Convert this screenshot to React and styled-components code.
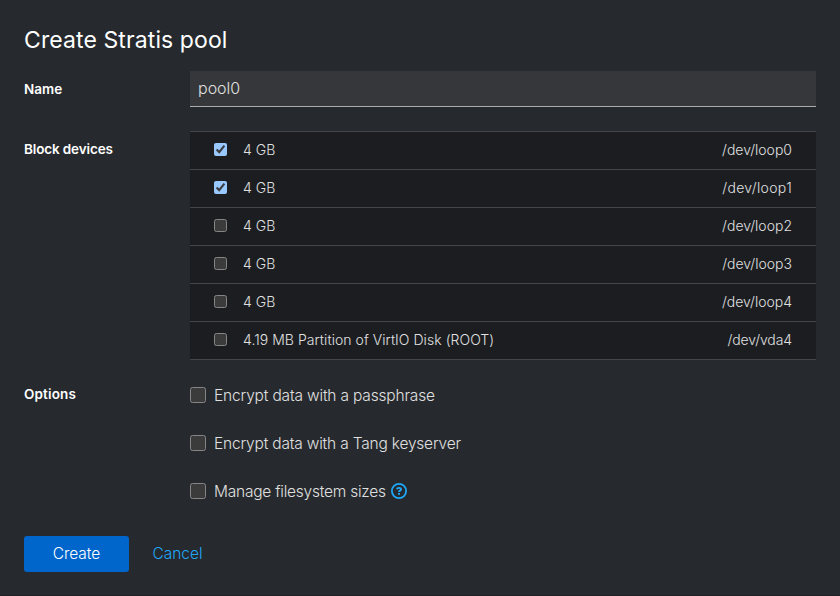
import React from "react";
import styled, { createGlobalStyle } from "styled-components";

const GlobalStyle = createGlobalStyle`
  * { box-sizing: border-box; }
  html { color-scheme: dark; background: #26292d; }
  body { margin: 0; font-family: "Inter", "Liberation Sans", sans-serif; color: #e0e0e0; }
`;

const Dialog = styled.form`
  width: 840px;
  height: 596px;
  padding: 25px 24px 0;
  background: #26292d;
  border-bottom: 1px solid #1f2024;
  display: flex;
  flex-direction: column;
`;

const Title = styled.h1`
  margin: 0 0 15px;
  height: 31px;
  font-size: 23px;
  line-height: 31px;
  font-weight: 400;
  color: #fff;
  letter-spacing: 0.1px;
`;

const Group = styled.div`
  display: grid;
  grid-template-columns: 150px 626px;
  column-gap: 16px;
  margin-bottom: ${(p) => p.$gap ?? 24}px;
`;

const Label = styled.span`
  padding-top: ${(p) => (p.$flush ? 0 : 8)}px;
  font-size: 13.5px;
  line-height: 20px;
  font-weight: 600;
  color: #fff;
  letter-spacing: ${(p) => p.$track || 0}px;
`;

const Text = styled.span`
  letter-spacing: ${(p) => p.$track || 0}px;
  white-space: nowrap;
`;

const NameInput = styled.input`
  height: 36px;
  width: 100%;
  padding: 0 8px 2px;
  border: 0;
  border-bottom: 1px solid #aaabac;
  border-radius: 0;
  outline: 0;
  background: #36373a;
  color: #e0e0e0;
  font: 300 16px "Inter", "Liberation Sans", sans-serif;
`;

const DeviceList = styled.ul`
  margin: 0;
  padding: 0;
  list-style: none;
  background: #1b1d21;
  border-top: 1px solid #444548;
`;

const Device = styled.li`
  height: 38px;
  padding: 0 24px 1px;
  display: flex;
  align-items: center;
  border-bottom: 1px solid #444548;
  font-size: 14px;
  line-height: 21px;
  font-weight: 300;

  > span {
    padding-bottom: 2px;
  }
`;

const DeviceCheck = styled.input`
  width: 13px;
  height: 13px;
  margin: 0 16px 1px 0;
`;

const DevicePath = styled(Text)`
  margin-left: auto;
`;

const Options = styled.div`
  display: flex;
  flex-direction: column;
  gap: 24px;
`;

const Option = styled.label`
  height: 24px;
  padding-bottom: 2px;
  display: flex;
  align-items: center;
  font-size: 15.5px;
  line-height: 22px;
  font-weight: 300;

  > span {
    padding-top: 2px;
  }
`;

const OptionCheck = styled.input`
  width: 16px;
  height: 16px;
  margin: 0 8px 0 0;
`;

const HelpIcon = styled.svg`
  width: 16px;
  height: 16px;
  margin-left: 5px;
  flex: none;
`;

const Actions = styled.div`
  display: flex;
  gap: 16px;
`;

const Button = styled.button`
  height: 36px;
  width: ${(p) => (p.$primary ? 105 : 65)}px;
  padding: 0 0 1px;
  border: 0;
  border-radius: 3px;
  background: ${(p) => (p.$primary ? "#0066cc" : "transparent")};
  color: ${(p) => (p.$primary ? "#fff" : "#1fa7f8")};
  font: 300 15.5px "Inter", "Liberation Sans", sans-serif;
`;

const devices = [
  { size: "4 GB", path: "/dev/loop0", checked: true },
  { size: "4 GB", path: "/dev/loop1", checked: true, track: 0.35 },
  { size: "4 GB", path: "/dev/loop2" },
  { size: "4 GB", path: "/dev/loop3" },
  { size: "4 GB", path: "/dev/loop4" },
  { size: "4.19 MB Partition of VirtIO Disk (ROOT)", path: "/dev/vda4", sizeTrack: 0.05, track: -0.1 },
];

const options = [
  { text: "Encrypt data with a passphrase", track: -0.17 },
  { text: "Encrypt data with a Tang keyserver", track: -0.19 },
  { text: "Manage filesystem sizes", track: -0.23, help: true },
];

export default function App() {
  return (
    <>
      <GlobalStyle />
      <Dialog onSubmit={(e) => e.preventDefault()}>
        <Title>Create Stratis pool</Title>
        <Group>
          <Label>Name</Label>
          <NameInput defaultValue="pool0" aria-label="Name" />
        </Group>
        <Group>
          <Label $track={-0.13}>Block devices</Label>
          <DeviceList>
            {devices.map((d) => (
              <Device key={d.path}>
                <DeviceCheck type="checkbox" defaultChecked={d.checked} aria-label={d.path} />
                <Text $track={d.sizeTrack}>{d.size}</Text>
                <DevicePath $track={d.track}>{d.path}</DevicePath>
              </Device>
            ))}
          </DeviceList>
        </Group>
        <Group $gap={32}>
          <Label $flush $track={0.15}>Options</Label>
          <Options>
            {options.map((o) => (
              <Option key={o.text}>
                <OptionCheck type="checkbox" />
                <Text $track={o.track}>{o.text}</Text>
                {o.help && (
                  <HelpIcon viewBox="0 0 16 16" fill="none" stroke="#1fa7f8">
                    <circle cx="8" cy="8" r="7.1" strokeWidth="1.8" />
                    <path d="M5.8 6.3C6.1 5.2 6.9 4.9 7.9 4.9c1.2 0 2.1.6 2.1 1.5 0 1.3-2 1.2-2 2.6" strokeWidth="1.9" />
                    <path d="M8 9.9v1.9" strokeWidth="2" />
                  </HelpIcon>
                )}
              </Option>
            ))}
          </Options>
        </Group>
        <Actions>
          <Button $primary type="submit"><Text>Create</Text></Button>
          <Button type="button"><Text>Cancel</Text></Button>
        </Actions>
      </Dialog>
    </>
  );
}
